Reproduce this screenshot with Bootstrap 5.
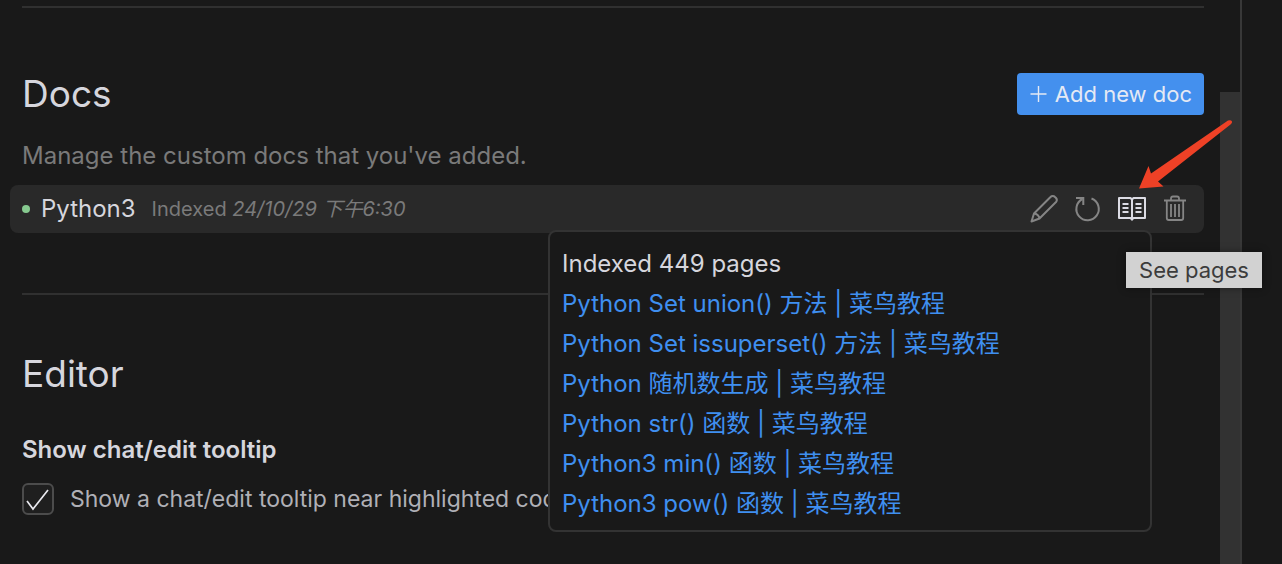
<!DOCTYPE html>
<html lang="en">
<head>
<meta charset="utf-8">
<meta name="viewport" content="width=device-width, initial-scale=1">
<title>Settings</title>
<link href="https://cdn.jsdelivr.net/npm/bootstrap@5.3.0/dist/css/bootstrap.min.css" rel="stylesheet">
<style>
  body { background: #191919; color: #d6d6dd; font-family: Inter, "Noto Sans CJK SC", sans-serif; font-size: 24px; line-height: 32px; }
  .settings-pane { border-right: 2px solid #383838; min-width: 0; }
  .settings-content { padding: 6px 16px 0 22px; min-width: 0; }
  .side-gutter { width: 40px; }
  .scroll-rail { width: 20px; padding-top: 92px; }
  .scroll-thumb { background: #323232; }
  .rule-line { border: 0; border-top: 2px solid #303030; opacity: 1; margin: 0; }
  .section-title { font-size: 37px; line-height: 44px; font-weight: 400; margin: 0; }
  .docs-head { margin-top: 64px; }
  .btn-add { background: #4490ee; color: #e4e9f4; font-size: 22px; line-height: 30px; padding: 6px 12px; border: 0; border-radius: 4px; gap: 8px; }
  .btn-add:hover { background: #5a9df0; color: #fff; }
  .text-dim { color: #7a7a7a; }
  .docs-note { margin: 24px 0 13px; }
  .doc-row { background: #292929; border-radius: 8px; height: 48px; margin-left: -12px; padding: 0 14px 0 12px; }
  .status-dot { width: 8px; height: 8px; border-radius: 50%; background: #86c98f; margin-right: 11px; }
  .doc-meta { font-size: 20px; margin-left: 16px; }
  .icon-btn { background: none; border: 0; padding: 0; color: #858585; width: 28px; height: 28px; }
  .icon-btn.is-on { color: #dcdce4; }
  .icon-btn svg { display: block; }
  .pages-pop { position: absolute; z-index: 2; top: 45px; right: 52px; width: 604px; background: #191919; border: 2px solid #333; border-radius: 8px; padding: 12px 12px 6px; }
  .pages-pop p, .pages-pop li { line-height: 40px; margin: 0; }
  .pages-pop a { color: #3f8ff0; text-decoration: none; }
  .tip-box { position: absolute; z-index: 3; top: 67px; right: -58px; width: 136px; background: #d2d2d2; color: #3c3c3c; font-size: 22px; line-height: 36px; text-align: center; box-shadow: 0 0 8px #0006; }
  .pointer-arrow { position: absolute; z-index: 3; top: -66px; right: -29px; pointer-events: none; }
  .docs-end { margin-top: 60px; }
  .editor-title { margin-top: 57px; }
  .option-title { font-size: 24px; line-height: 32px; font-weight: 600; margin: 38px 0 17px; }
  .option-row { gap: 16px; color: #b0b0b6; font-size: 23px; }
  .option-row .form-check-input { width: 32px; height: 32px; margin: 0; flex: none; border: 2px solid #4c4c4c; border-radius: 6px; background-color: #1f1f1f; }
  .option-row .form-check-input:checked { background-size: 28px 28px; background-image: url("data:image/svg+xml,%3Csvg xmlns='http://www.w3.org/2000/svg' viewBox='0 0 28 28'%3E%3Cpath d='M3 16l6 8L24 5' fill='none' stroke='%23e8e8ee' stroke-width='1.7'/%3E%3C/svg%3E"); }
</style>
</head>
<body>
<div class="d-flex vh-100 overflow-hidden">
  <main class="settings-pane d-flex flex-grow-1">
    <div class="settings-content flex-grow-1">
      <hr class="rule-line">
      <section>
        <div class="docs-head d-flex align-items-center justify-content-between">
          <h2 class="section-title">Docs</h2>
          <button type="button" class="btn btn-add d-flex align-items-center">
            <svg width="18" height="18" viewBox="0 0 18 18" fill="none" stroke="currentColor" stroke-width="1.4" aria-hidden="true"><path d="M9.500 1v16M1.500 9h16"/></svg>
            Add new doc
          </button>
        </div>
        <p class="docs-note text-dim">Manage the custom docs that you've added.</p>
        <div class="doc-row d-flex align-items-center position-relative">
          <span class="status-dot"></span>
          <span>Python3</span>
          <span class="doc-meta text-dim">Indexed <em>24/10/29 下午6:30</em></span>
          <div class="d-flex ms-auto gap-3">
            <button type="button" class="icon-btn" aria-label="Edit"><svg width="28" height="28" viewBox="0 0 28 28" fill="none" stroke="currentColor" stroke-width="2" stroke-linejoin="round"><path d="M1.500 26.500L4 18.500 20.500 2a3.100 3.100 0 0 1 4.500 0l1 1a3.100 3.100 0 0 1 0 4L9.500 23.500zM4 18.500q4.500.500 5.500 5"/></svg></button>
            <button type="button" class="icon-btn" aria-label="Reindex"><svg width="28" height="28" viewBox="0 0 28 28" fill="none" stroke="currentColor" stroke-width="2"><path d="M17.500 3.500A11.200 11.200 0 1 1 8.500 4"/><path d="M2 3h7.300v7"/></svg></button>
            <button type="button" class="icon-btn is-on" aria-label="See pages"><svg width="28" height="28" viewBox="0 0 28 28" fill="none" stroke="currentColor" stroke-width="2" stroke-linejoin="round"><path d="M1 3h11.500L14 4.500 15.500 3H27v20H15.500L14 24.500 12.500 23H1zM14 4.500v21M4.500 9h6M4.500 13h6M4.500 17h6M17.500 9h6M17.500 13h6M17.500 17h6"/></svg></button>
            <button type="button" class="icon-btn" aria-label="Delete"><svg width="28" height="28" viewBox="0 0 28 28" fill="none" stroke="currentColor" stroke-width="1.800"><path d="M2 5.500h22M9 5.500V3.500q0-2 2-2h4q2 0 2 2v2M4.800 5.500V23q0 2 2 2h12.400q2 0 2-2V5.500M9 9v13M13 9v13M17 9v13"/></svg></button>
          </div>
          <div class="pages-pop">
            <p>Indexed 449 pages</p>
            <ul class="list-unstyled mb-0">
              <li><a href="#">Python Set union() 方法 | 菜鸟教程</a></li>
              <li><a href="#">Python Set issuperset() 方法 | 菜鸟教程</a></li>
              <li><a href="#">Python 随机数生成 | 菜鸟教程</a></li>
              <li><a href="#">Python str() 函数 | 菜鸟教程</a></li>
              <li><a href="#">Python3 min() 函数 | 菜鸟教程</a></li>
              <li><a href="#">Python3 pow() 函数 | 菜鸟教程</a></li>
            </ul>
          </div>
          <div class="tip-box" role="tooltip">See pages</div>
          <svg class="pointer-arrow" width="96" height="72" viewBox="0 0 96 72" aria-hidden="true"><path fill="#ee4126" d="M91 1.500q3-1 4 1 .500 1.500-1.500 3L21 62.500l5.500 5L2 69.500 11.500 47l2.500 7.500z"/></svg>
        </div>
      </section>
      <hr class="rule-line docs-end">
      <section>
        <h2 class="section-title editor-title">Editor</h2>
        <h3 class="option-title">Show chat/edit tooltip</h3>
        <div class="option-row d-flex align-items-center">
          <input class="form-check-input" type="checkbox" id="chatTooltip" checked>
          <label for="chatTooltip">Show a chat/edit tooltip near highlighted code</label>
        </div>
      </section>
    </div>
    <div class="scroll-rail d-flex flex-column flex-shrink-0"><div class="scroll-thumb flex-grow-1"></div></div>
  </main>
  <aside class="side-gutter flex-shrink-0"></aside>
</div>
<script src="https://cdn.jsdelivr.net/npm/bootstrap@5.3.0/dist/js/bootstrap.bundle.min.js"></script>
</body>
</html>
